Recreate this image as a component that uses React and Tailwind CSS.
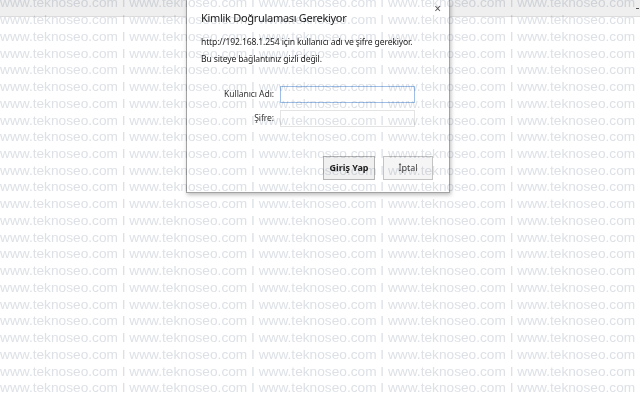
import React from "react";

const ROW = "www.teknoseo.com I www.teknoseo.com I www.teknoseo.com I www.teknoseo.com I www.teknoseo.com I www.teknoseo.com I";

function Watermark() {
  const rows = Array.from({ length: 26 });
  return (
    <div className="pointer-events-none absolute inset-0 overflow-hidden mix-blend-multiply">
      <div className="-mt-[4.6px] flex flex-col" style={{ fontFamily: '"Liberation Sans", Arial, sans-serif' }}>
        {rows.map((_, i) => (
          <div key={i} className="whitespace-pre text-[13.7px] leading-[16.74px] text-[#dde1e6]">
            {ROW}
          </div>
        ))}
      </div>
    </div>
  );
}

function Field({ label, active }) {
  return (
    <div className="flex items-center">
      <div className="w-[88px] pr-[6px] text-right text-[8.6px] tracking-[-0.1px] text-[#333]">{label}</div>
      <div
        className={
          "h-[17px] w-[135px] bg-white " +
          (active ? "border border-[#9fbfe8]" : "border border-[#e4e4e4]")
        }
      />
    </div>
  );
}

export default function App() {
  return (
    <div className="relative h-[400px] w-[640px] overflow-hidden bg-white">
      {/* browser strip at the top */}
      <div className="relative h-[17px] w-full border-b border-[#dcdcdc] bg-[#efefef]">
        <div className="absolute right-[1px] top-[8px] h-[1px] w-[3px] bg-[#555]" />
      </div>

      {/* authentication dialog */}
      <div
        className="absolute left-[186px] top-0 flex h-[193px] w-[264px] flex-col border border-t-0 border-[#a3a3a3] bg-white shadow-[1px_2px_4px_rgba(0,0,0,0.25)]"
        style={{ fontFamily: '"Noto Sans", "Open Sans", sans-serif' }}
      >
        <div className="relative px-[14px] pt-[10px]">
          <div className="text-[11px] leading-[16px] tracking-[-0.3px] text-[#222]">Kimlik Doğrulaması Gerekiyor</div>
          <div className="absolute right-[8px] top-[3px] text-[12px] leading-[12px] text-[#555]">×</div>
        </div>
        <div className="mt-[10px] px-[14px] text-[8.6px] leading-[12px] tracking-[-0.15px] text-[#222]">
          http://192.168.1.254 için kullanıcı adı ve şifre gerekiyor.
        </div>
        <div className="mt-[5px] px-[14px] text-[8.6px] leading-[12px] tracking-[-0.15px] text-[#222]">
          Bu siteye bağlantınız gizli değil.
        </div>
        <div className="mt-[21px] flex flex-col gap-[7px] pl-[5px]">
          <Field label="Kullanıcı Adı:" active />
          <Field label="Şifre:" />
        </div>
        <div className="mt-[29px] flex justify-end gap-[8px] pr-[16px]">
          <div className="flex h-[24px] w-[52px] items-center justify-center border border-[#b5b5b5] bg-[#f0f0f0] text-[9px] font-bold text-[#222]">
            Giriş Yap
          </div>
          <div className="flex h-[24px] w-[50px] items-center justify-center border border-[#c4c4c4] bg-[#f5f5f5] text-[9px] text-[#444]">
            İptal
          </div>
        </div>
      </div>

      <Watermark />
    </div>
  );
}
